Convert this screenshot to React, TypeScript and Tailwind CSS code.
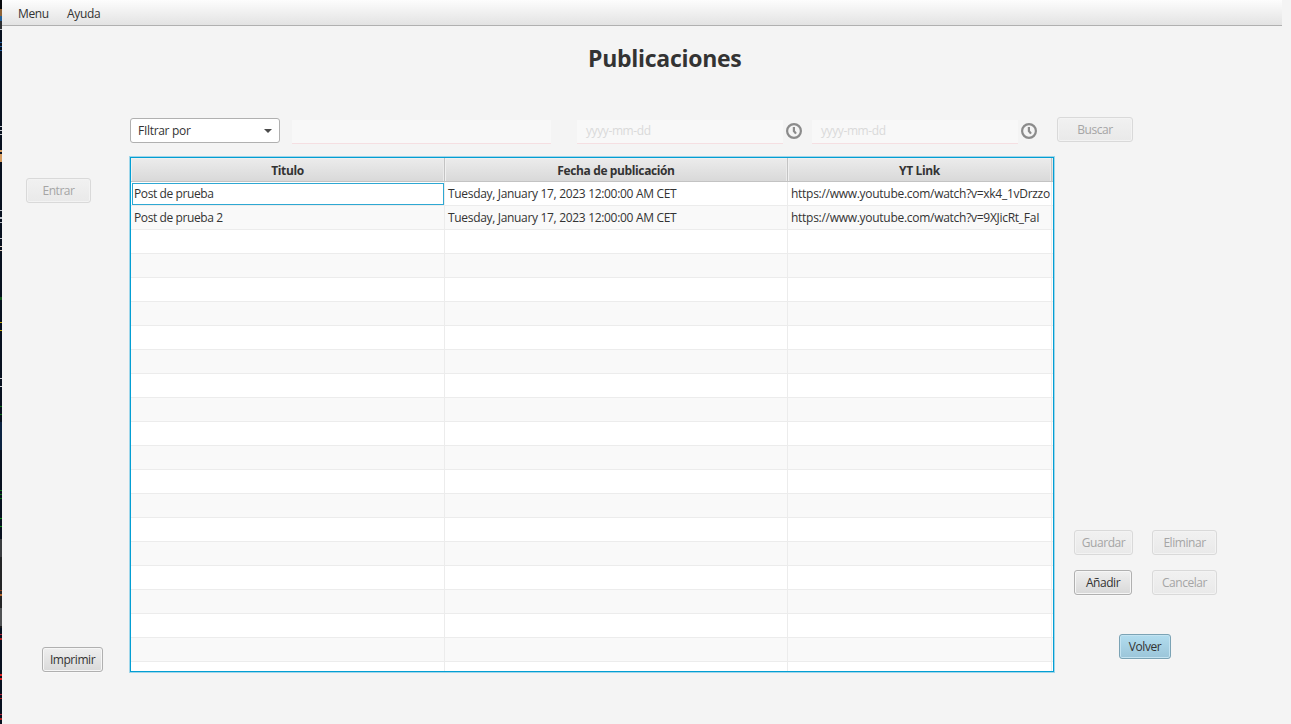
import React from "react";

type ButtonProps = {
  label: string;
  className: string;
  text?: string;
  variant?: "normal" | "disabled" | "armed";
};

const variants = {
  normal: "border-[#b0b0b0] bg-linear-to-b from-[#efefef] to-[#d9d9d9] shadow-[inset_0_0_0_1px_#f6f6f6,0_1px_0_#f8f8f8] text-[#333333]",
  disabled: "border-[#d9d9d9] bg-linear-to-b from-[#f1f1f1] to-[#e9e9e9] shadow-[inset_0_0_0_1px_#f3f3f3] text-[#a5a5a5]",
  armed: "border-[#7ba3b5] bg-linear-to-b from-[#b2ddef] to-[#9bc5d9] shadow-[inset_0_0_0_1px_#c3e3f1,0_1px_0_#f8f8f8] text-[#333333]",
};

function Button({ label, className, text = "tracking-[-0.45px]", variant = "normal" }: ButtonProps) {
  return (
    <button className={`flex shrink-0 items-center justify-center rounded-[3px] border leading-4 whitespace-nowrap ${variants[variant]} ${className}`}>
      <span className={text}>{label}</span>
    </button>
  );
}

function ClockIcon() {
  return (
    <svg className="ml-[10px] size-4 shrink-0" viewBox="0 0 16 16" fill="none" stroke="#8b8b8b">
      <circle cx="8" cy="8" r="6.9" strokeWidth="2.2" />
      <path d="M7.9 3.9V8L10 10.6" strokeWidth="2.2" />
    </svg>
  );
}

function DateField({ className }: { className: string }) {
  return (
    <div className={`mt-[3px] flex h-6 shrink-0 items-center border-b border-[#f5dfe2] bg-[#f8f8f8] pl-[9px] text-[#dadada] ${className}`}>
      <span className="-mt-px tracking-[-0.4px]">yyyy-mm-dd</span>
    </div>
  );
}

const headers = [
  { label: "Titulo", text: "tracking-[-0.4px]" },
  { label: "Fecha de publicación", text: "tracking-[-0.38px]" },
  { label: "YT Link", text: "tracking-[-0.35px]" },
];

const posts = [
  ["Post de prueba", "Tuesday, January 17, 2023 12:00:00 AM CET", "https://www.youtube.com/watch?v=xk4_1vDrzzo"],
  ["Post de prueba 2", "Tuesday, January 17, 2023 12:00:00 AM CET", "https://www.youtube.com/watch?v=9XJicRt_FaI"],
];

const rows = Array.from({ length: 21 }, (_, i) => posts[i] ?? ["", "", ""]);

const cellText = ["tracking-[-0.4px]", "tracking-[-0.32px]", "tracking-[-0.28px]"];

function PostsTable() {
  return (
    <div className="h-[517px] w-[926px] shrink-0 border border-[#9fd6ea]">
      <div className="flex h-full flex-col overflow-hidden border border-[#039ed3] bg-white">
        <div className="grid h-6 shrink-0 grid-cols-[314px_343px_264px_1px] border-b border-[#c3c3c3] bg-linear-to-b from-[#ececec] to-[#d9d9d9]">
          {headers.map((h) => (
            <div key={h.label} className="flex items-center justify-center border-r border-[#c3c3c3] pt-0.5 font-bold shadow-[inset_1px_1px_0_#f0f0f0,inset_-1px_0_0_#ebebeb]">
              <span className={h.text}>{h.label}</span>
            </div>
          ))}
        </div>
        {rows.map((row, r) => (
          <div
            key={r}
            className={`grid h-6 shrink-0 grid-cols-[314px_343px_264px_1px] border-b border-[#ececec] ${r % 2 ? "bg-[#f9f9f9]" : "bg-white"}`}
          >
            {row.map((value, c) => (
              <div key={c} className="border-r border-[#ececec]">
                <div className={`flex items-center whitespace-nowrap ${r === 0 && c === 0 ? "mt-px ml-px h-[22px] border border-[#2ea8d3] pb-px pl-px" : "h-[23px] pl-[3px]"}`}>
                  <span className={cellText[c]}>{value}</span>
                </div>
              </div>
            ))}
          </div>
        ))}
      </div>
    </div>
  );
}

type Mark = { h: number; color: string };

const edgeMarks: Mark[] = [
  { h: 9, color: "#07090d" }, { h: 7, color: "#8d6236" }, { h: 5, color: "#225f96" }, { h: 8, color: "#2b2d31" },
  { h: 1, color: "#b8bcc4" }, { h: 12, color: "#07101f" }, { h: 1, color: "#1f5da0" }, { h: 3, color: "#07101f" },
  { h: 1, color: "#1f5da0" }, { h: 3, color: "#07101f" }, { h: 1, color: "#1f5da0" }, { h: 75, color: "#07101f" },
  { h: 1, color: "#c2c5cb" }, { h: 3, color: "#07101f" }, { h: 1, color: "#c2c5cb" }, { h: 3, color: "#07101f" },
  { h: 1, color: "#c2c5cb" }, { h: 15, color: "#07101f" }, { h: 2, color: "#d39a5f" }, { h: 2, color: "#07101f" },
  { h: 8, color: "#d39a5f" }, { h: 48, color: "#07101f" }, { h: 1, color: "#b8bcc4" }, { h: 6, color: "#07101f" },
  { h: 2, color: "#b8bcc4" }, { h: 3, color: "#07101f" }, { h: 1, color: "#b8bcc4" }, { h: 15, color: "#07101f" },
  { h: 1, color: "#b8bcc4" }, { h: 7, color: "#07101f" }, { h: 1, color: "#dac9ba" }, { h: 3, color: "#07101f" },
  { h: 1, color: "#dac9ba" }, { h: 46, color: "#07101f" }, { h: 3, color: "#11531c" }, { h: 22, color: "#07101f" },
  { h: 1, color: "#c3a60c" }, { h: 7, color: "#07101f" }, { h: 1, color: "#c3a60c" }, { h: 47, color: "#07101f" },
  { h: 1, color: "#c8cace" }, { h: 7, color: "#07101f" }, { h: 1, color: "#c8cace" }, { h: 19, color: "#07101f" },
  { h: 1, color: "#0c6f18" }, { h: 7, color: "#07101f" }, { h: 1, color: "#0c6f18" }, { h: 7, color: "#07101f" },
  { h: 28, color: "#0b2342" }, { h: 40, color: "#07101f" }, { h: 1, color: "#0c6f18" }, { h: 3, color: "#07101f" },
  { h: 1, color: "#0c6f18" }, { h: 3, color: "#07101f" }, { h: 1, color: "#0c6f18" }, { h: 19, color: "#07101f" },
  { h: 1, color: "#0c8d18" }, { h: 7, color: "#07101f" }, { h: 1, color: "#0c8d18" }, { h: 12, color: "#07101f" },
  { h: 18, color: "#3a3d40" }, { h: 33, color: "#242526" }, { h: 1, color: "#8a3d1c" }, { h: 3, color: "#242526" },
  { h: 2, color: "#b4652c" }, { h: 12, color: "#242526" }, { h: 18, color: "#505254" }, { h: 2, color: "#1b1c1e" },
  { h: 6, color: "#07101f" }, { h: 1, color: "#b02038" }, { h: 3, color: "#07101f" }, { h: 2, color: "#b02020" },
  { h: 34, color: "#07101f" }, { h: 2, color: "#e02020" }, { h: 2, color: "#07101f" }, { h: 2, color: "#e02020" },
  { h: 14, color: "#07101f" }, { h: 1, color: "#b02038" }, { h: 3, color: "#07101f" }, { h: 1, color: "#b02020" },
  { h: 15, color: "#07101f" }, { h: 1, color: "#b02038" }, { h: 3, color: "#07101f" }, { h: 2, color: "#b02020" },
];

export default function App() {
  return (
    <div className="flex h-[724px] w-[1291px] overflow-hidden bg-[#f4f4f4] font-['Open_Sans','Noto_Sans',sans-serif] text-[12px] leading-4 text-[#333333]">
      <div className="flex w-[2px] shrink-0 flex-col overflow-hidden bg-[#07101f]">
        {edgeMarks.map((m, i) => (
          <div key={i} className="w-full shrink-0" style={{ height: m.h, backgroundColor: m.color }} />
        ))}
      </div>
      <div className="flex w-[1289px] flex-col">
        <nav className="flex h-[26px] w-[1280px] shrink-0 items-center gap-[19px] border-b border-[#b0b0b0] bg-linear-to-b from-[#fdfdfd] to-[#e3e3e3] pt-[3px] pl-4">
          <span className="w-[30px] tracking-[-0.4px]">Menu</span>
          <span className="tracking-[-0.3px]">Ayuda</span>
        </nav>
        <h1 className="mt-4 ml-[586px] h-8 shrink-0 text-[23px] leading-8 font-bold tracking-[-0.28px]">Publicaciones</h1>
        <div className="mt-[43px] ml-[128px] flex h-[39px] shrink-0 items-start">
          <div className="mt-px flex h-[25px] w-[150px] shrink-0 items-center justify-between rounded-[3px] border border-[#b0b0b0] bg-white pr-[7px] pl-[7px]">
            <span className="tracking-[-0.3px]">FIltrar por</span>
            <svg className="h-1 w-2" viewBox="0 0 8 4"><path d="M0 0H8L4 4Z" fill="#4b4b4b" /></svg>
          </div>
          <div className="mt-[3px] ml-3 h-6 w-[259px] shrink-0 border-b border-[#f5dfe2] bg-[#f8f8f8]" />
          <DateField className="ml-[26px] w-[206px]" />
          <div className="-ml-[7px] pt-[6px]"><ClockIcon /></div>
          <DateField className="ml-[10px] w-[206px]" />
          <div className="-ml-[7px] pt-[6px]"><ClockIcon /></div>
          <Button label="Buscar" variant="disabled" className="ml-[20px] h-[25px] w-[76px]" />
        </div>
        <div className="flex h-[517px] shrink-0">
          <div className="flex w-[127px] shrink-0 flex-col pt-[22px] pl-6">
            <Button label="Entrar" variant="disabled" className="h-[25px] w-[65px]" />
            <Button label="Imprimir" className="mt-[444px] ml-4 h-[25px] w-[61px]" />
          </div>
          <PostsTable />
          <div className="flex flex-col pt-[374px] pl-[19px]">
            <div className="grid grid-cols-[59px_65px] gap-x-[19px] gap-y-[15px]">
              <Button label="Guardar" variant="disabled" className="h-[25px] w-[59px]" />
              <Button label="Eliminar" variant="disabled" className="h-[25px] w-[65px]" />
              <Button label="Añadir" className="h-[25px] w-[58px]" />
              <Button label="Cancelar" variant="disabled" className="h-[25px] w-[65px]" />
            </div>
            <Button label="Volver" variant="armed" className="mt-[39px] ml-[45px] h-[25px] w-[52px]" />
          </div>
        </div>
      </div>
    </div>
  );
}
